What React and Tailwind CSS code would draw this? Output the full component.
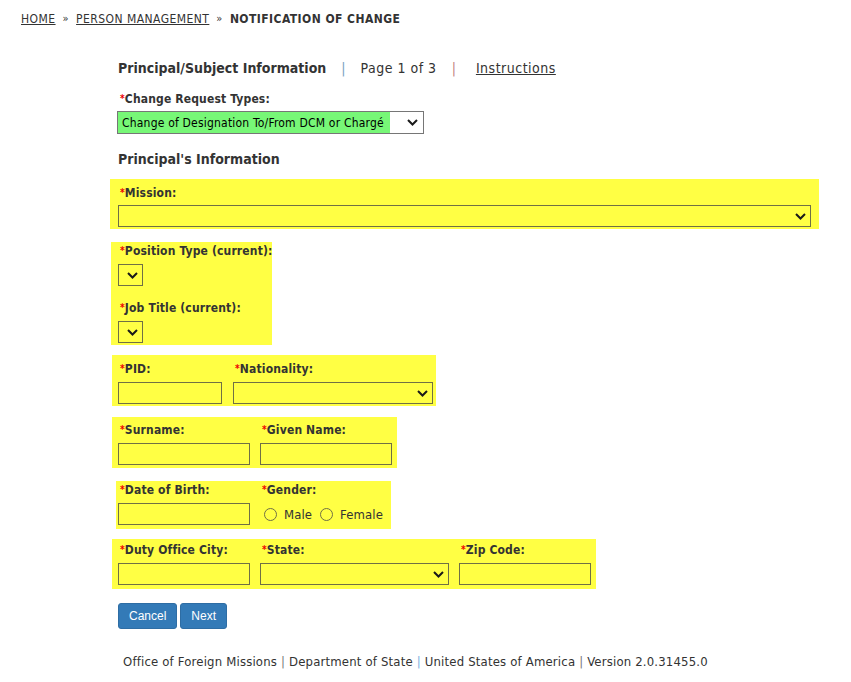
import React from 'react';

const Chevron = () => (
  <svg width="11" height="7" viewBox="0 0 11 7" className="shrink-0">
    <path d="M1 1 L5.5 5.5 L10 1" fill="none" stroke="#1a1a1a" strokeWidth="2" />
  </svg>
);

const Req = ({ children }) => (
  <div className="text-[12px] font-bold text-[#333] leading-[16px] whitespace-nowrap tracking-[0.15px]">
    <span className="text-[#e00] text-[10px] align-top">*</span>
    {children}
  </div>
);

const Select = ({ className = '' }) => (
  <div className={`h-[22px] border border-[#707045] flex items-center justify-end pr-[4px] ${className}`}>
    <Chevron />
  </div>
);

const Input = ({ className = '' }) => (
  <div className={`h-[22px] border border-[#707045] ${className}`} />
);

const Radio = ({ label }) => (
  <div className="flex items-center gap-[7px]">
    <span className="w-[13px] h-[13px] rounded-full border border-[#707045]" />
    <span className="text-[13px] text-[#333] tracking-[0.1px]">{label}</span>
  </div>
);

const App = () => {
  return (
    <div className="w-[851px] h-[682px] bg-white text-[#333] font-['DejaVu_Sans_Condensed','DejaVu_Sans',sans-serif] overflow-hidden">
      {/* breadcrumb */}
      <div className="pt-[11px] pl-[21px] text-[12px] leading-[16px] flex items-center gap-[7px] tracking-[0.45px]">
        <span className="underline">HOME</span>
        <span className="text-[11px]">»</span>
        <span className="underline">PERSON MANAGEMENT</span>
        <span className="text-[11px]">»</span>
        <span className="font-bold tracking-[0.45px]">NOTIFICATION OF CHANGE</span>
      </div>

      <div className="pl-[118px] pt-[31px]">
        <div className="flex items-center text-[14px] leading-[20px]">
          <span className="font-bold">Principal/Subject Information</span>
          <span className="text-[#7a9ec0] mx-[15px]">|</span>
          <span className="tracking-[0.5px]">Page 1 of 3</span>
          <span className="text-[#c08080] ml-[15px] mr-[20px]">|</span>
          <span className="underline tracking-[0.5px]">Instructions</span>
        </div>

        <div className="mt-[13px] ml-[2px]">
          <Req>Change Request Types:</Req>
        </div>
        <div className="mt-[4px] -ml-[1px] w-[307px] h-[23px] border border-[#767676] flex items-center">
          <div className="h-full bg-[#77f777] flex items-center pl-[4px] w-[272px] text-[12px] text-black tracking-[0.2px] whitespace-nowrap">
            Change of Designation To/From DCM or Chargé
          </div>
          <div className="flex-1 flex justify-end pr-[5px]"><Chevron /></div>
        </div>

        <div className="mt-[15px] text-[14px] font-bold leading-[20px]">Principal's Information</div>
      </div>

      <div className="pl-[110px] flex flex-col items-start">
        {/* Mission */}
        <div className="mt-[10px] w-[709px] bg-[#ffff44] px-[8px] pt-[6px] pb-[2px]">
          <div className="pl-[2px]"><Req>Mission:</Req></div>
          <Select className="mt-[4px] w-[693px]" />
        </div>

        {/* Position / Job */}
        <div className="mt-[13px] ml-[1px] w-[161px] bg-[#ffff44] px-[7px] pt-[1px] pb-[2px]">
          <div className="pl-[2px]"><Req>Position Type (current):</Req></div>
          <Select className="mt-[5px] w-[25px]" />
          <div className="pl-[2px] mt-[14px]"><Req>Job Title (current):</Req></div>
          <Select className="mt-[5px] w-[25px]" />
        </div>

        {/* PID / Nationality */}
        <div className="mt-[10px] ml-[2px] bg-[#ffff44] pl-[6px] pr-[3px] pt-[6px] pb-[2px] flex gap-[11px]">
          <div>
            <div className="pl-[2px]"><Req>PID:</Req></div>
            <Input className="mt-[5px] w-[104px]" />
          </div>
          <div>
            <div className="pl-[2px]"><Req>Nationality:</Req></div>
            <Select className="mt-[5px] w-[200px]" />
          </div>
        </div>

        {/* Surname / Given */}
        <div className="mt-[11px] ml-[2px] bg-[#ffff44] pl-[6px] pr-[5px] pt-[5px] pb-[3px] flex gap-[10px]">
          <div>
            <div className="pl-[2px]"><Req>Surname:</Req></div>
            <Input className="mt-[5px] w-[132px]" />
          </div>
          <div>
            <div className="pl-[2px]"><Req>Given Name:</Req></div>
            <Input className="mt-[5px] w-[132px]" />
          </div>
        </div>

        {/* DOB / Gender */}
        <div className="mt-[13px] ml-[6px] bg-[#ffff44] pl-[2px] pr-[8px] pt-[1px] pb-[4px] flex gap-[10px]">
          <div>
            <div className="pl-[2px]"><Req>Date of Birth:</Req></div>
            <Input className="mt-[5px] w-[132px]" />
          </div>
          <div>
            <div className="pl-[2px]"><Req>Gender:</Req></div>
            <div className="mt-[7px] flex items-center gap-[8px] pl-[4px]">
              <Radio label="Male" />
              <Radio label="Female" />
            </div>
          </div>
        </div>

        {/* Duty / State / Zip */}
        <div className="mt-[10px] ml-[2px] bg-[#ffff44] pl-[6px] pr-[5px] pt-[3px] pb-[4px] flex gap-[10px]">
          <div>
            <div className="pl-[2px]"><Req>Duty Office City:</Req></div>
            <Input className="mt-[5px] w-[132px]" />
          </div>
          <div>
            <div className="pl-[2px]"><Req>State:</Req></div>
            <Select className="mt-[5px] w-[189px]" />
          </div>
          <div>
            <div className="pl-[2px]"><Req>Zip Code:</Req></div>
            <Input className="mt-[5px] w-[132px]" />
          </div>
        </div>

        <div className="mt-[14px] ml-[8px] flex gap-[3px]">
          <button className="h-[26px] px-[10px] rounded-[3px] bg-[#337ab7] border border-[#2e6da4] text-white text-[12px] font-['Liberation_Sans',sans-serif]">Cancel</button>
          <button className="h-[26px] px-[10px] rounded-[3px] bg-[#337ab7] border border-[#2e6da4] text-white text-[12px] font-['Liberation_Sans',sans-serif]">Next</button>
        </div>
      </div>

      <div className="mt-[24px] pl-[123px] text-[13px] leading-[18px] whitespace-nowrap tracking-[0.18px]">
        Office of Foreign Missions <span className="text-[#777]">|</span> Department of State{' '}
        <span className="text-[#7ab0e0]">|</span> United States of America <span className="text-[#777]">|</span> Version 2.0.31455.0
      </div>
    </div>
  );
};

export default App;
